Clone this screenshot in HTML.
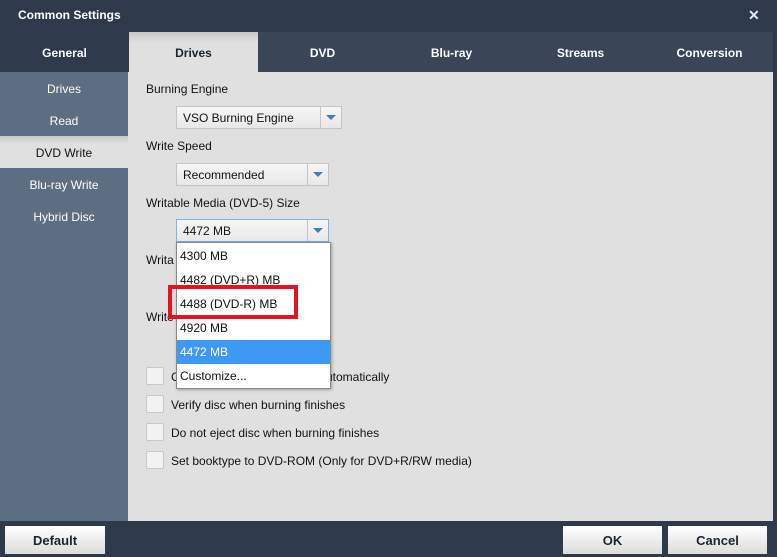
<!DOCTYPE html>
<html><head><style>
*{margin:0;padding:0;box-sizing:border-box}
body{width:777px;height:557px;background:#2e3a4b;font-family:"Liberation Sans",sans-serif;position:relative;overflow:hidden}
.a{position:absolute}
.title{left:18px;top:8px;color:#fff;font-weight:bold;font-size:12px}
.x{left:748px;top:7px;color:#e6e9ee;font-weight:bold;font-size:14px}
.tabs{left:0;top:32px;width:773px;height:40px;background:#3a4658}
.tab{position:absolute;top:0;height:40px;width:129px;text-align:center;line-height:43px;color:#fff;font-weight:bold;font-size:12px}
.side{left:0;top:72px;width:128px;height:449px;background:#5b6e82}
.si{position:absolute;left:0;width:128px;height:32px;line-height:34px;text-align:center;color:#fff;font-size:12px}
.content{left:128px;top:72px;width:645px;height:449px;background:#e0e0e0}
.lbl{font-size:12px;color:#111}
.combo{background:linear-gradient(#f6f6f6,#e8e8e8);border:1px solid #c4c4c4;height:23px;font-size:12px;line-height:22px;padding-left:6px;color:#111}
.arr{position:absolute;right:0;top:0;width:21px;height:21px;border-left:1px solid #c4c4c4}
.arr:after{content:"";position:absolute;left:5px;top:8px;border-left:5px solid transparent;border-right:5px solid transparent;border-top:5px solid #3f7fbf}
.cb{width:18px;height:18px;border:1px solid #c8c8c8;background:#f2f2f2;border-radius:2px}
.btn{top:526px;height:28px;background:linear-gradient(#fff,#dcdcdc);text-align:center;line-height:29px;font-family:"Liberation Sans Narrow","Liberation Sans",sans-serif;font-weight:bold;font-size:13px;color:#1a2533}
.list{left:176px;top:242px;width:155px;height:147px;background:#fff;border:1px solid #8a8a8a;box-shadow:1px 1px 3px rgba(0,0,0,.3)}
.it{position:absolute;left:0;width:153px;height:24px;line-height:25px;padding-left:3px;font-size:12px;color:#111}
</style></head><body>
<div class="a title">Common Settings</div>
<div class="a x">✕</div>
<div class="a tabs">
<div class="tab" style="left:0;width:129px;background:#2e3a4b">General</div>
<div class="tab" style="left:129px;background:linear-gradient(#c8c8c8,#e0e0e0 10px);color:#1a2533;line-height:42px">Drives</div>
<div class="tab" style="left:258px">DVD</div>
<div class="tab" style="left:387px">Blu-ray</div>
<div class="tab" style="left:516px">Streams</div>
<div class="tab" style="left:645px">Conversion</div>
</div>
<div class="a side">
<div class="si" style="top:0">Drives</div>
<div class="si" style="top:32px">Read</div>
<div class="si" style="top:64px;background:linear-gradient(#c8c8c8,#e0e0e0 8px);color:#111">DVD Write</div>
<div class="si" style="top:96px">Blu-ray Write</div>
<div class="si" style="top:128px">Hybrid Disc</div>
</div>
<div class="a content"></div>
<div class="a lbl" style="left:146px;top:82px">Burning Engine</div>
<div class="a combo" style="left:176px;top:106px;width:166px">VSO Burning Engine<div class="arr"></div></div>
<div class="a lbl" style="left:146px;top:139px">Write Speed</div>
<div class="a combo" style="left:176px;top:163px;width:153px">Recommended<div class="arr"></div></div>
<div class="a lbl" style="left:146px;top:196px">Writable Media (DVD-5) Size</div>
<div class="a combo" style="left:176px;top:219px;width:153px;border-color:#7fb2e5">4472 MB<div class="arr"></div></div>
<div class="a lbl" style="left:146px;top:253px">Writa</div>
<div class="a lbl" style="left:146px;top:310px">Write</div>
<div class="a cb" style="left:146px;top:367px"></div><div class="a lbl" style="left:171px;top:370px">C</div><div class="a lbl" style="left:326px;top:370px">utomatically</div>
<div class="a cb" style="left:146px;top:395px"></div><div class="a lbl" style="left:171px;top:398px">Verify disc when burning finishes</div>
<div class="a cb" style="left:146px;top:423px"></div><div class="a lbl" style="left:171px;top:426px">Do not eject disc when burning finishes</div>
<div class="a cb" style="left:146px;top:451px"></div><div class="a lbl" style="left:171px;top:454px">Set booktype to DVD-ROM (Only for DVD+R/RW media)</div>
<div class="a list">
<div class="it" style="top:1px">4300 MB</div>
<div class="it" style="top:25px">4482 (DVD+R) MB</div>
<div class="it" style="top:49px">4488 (DVD-R) MB</div>
<div class="it" style="top:73px">4920 MB</div>
<div class="it" style="top:97px;background:#3d99f5;color:#fff">4472 MB</div>
<div class="it" style="top:121px">Customize...</div>
</div>
<div class="a" style="left:168px;top:285px;width:130px;height:34px;border:4px solid #e8121f"></div>
<div class="a btn" style="left:5px;width:100px">Default</div>
<div class="a btn" style="left:563px;width:99px">OK</div>
<div class="a btn" style="left:668px;width:99px">Cancel</div>
</body></html>
